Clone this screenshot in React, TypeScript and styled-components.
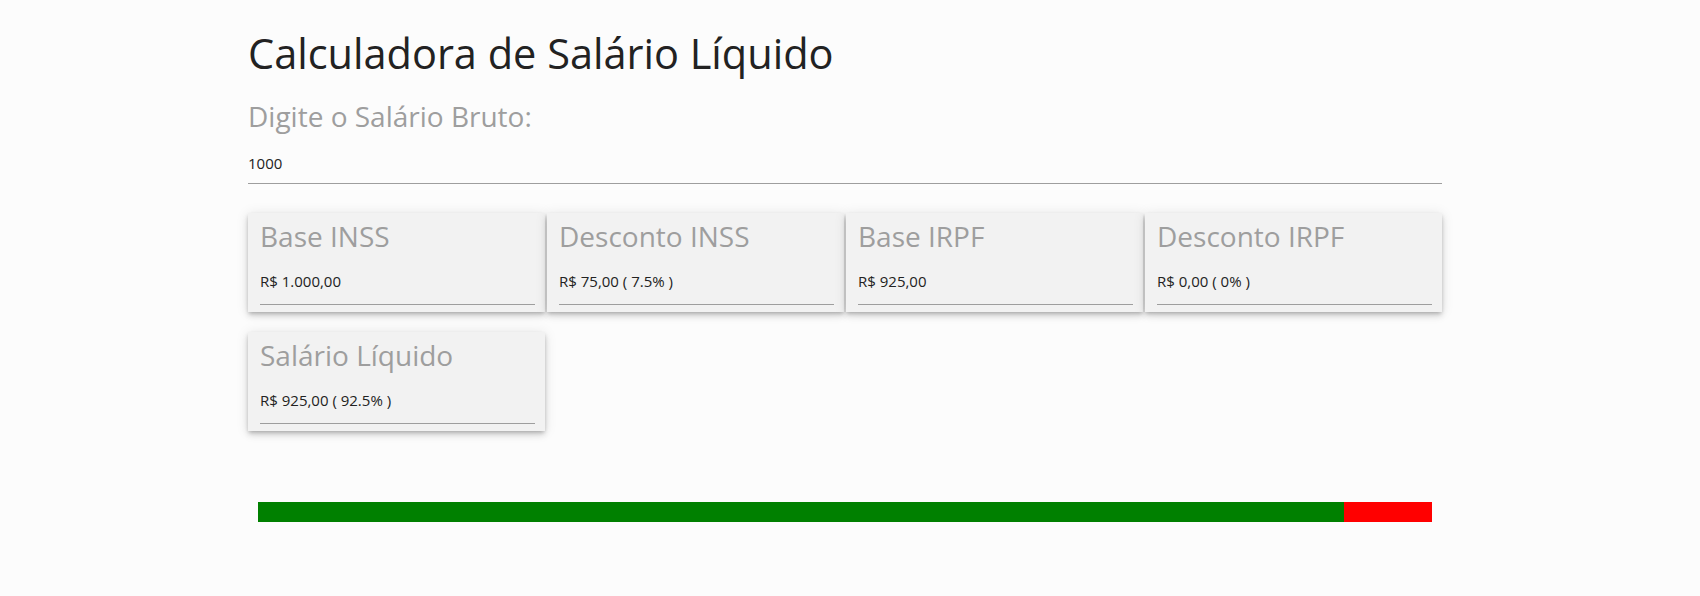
import React, {useMemo, useState} from "react";
import styled, {createGlobalStyle} from "styled-components";

const GlobalStyle = createGlobalStyle`
  body {
    margin: 0;
    background: #fcfcfc;
    font-family: "Open Sans", "Noto Sans", sans-serif;
  }
`

const Page = styled.div`
  padding-top: 29px;
`

const Container = styled.div`
  width: 1194px;
  margin-left: 248px;
`

const Title = styled.h1`
  margin: 0;
  font-size: 41.5px;
  line-height: 48px;
  font-weight: 400;
  color: #222;
`

const Label = styled.label`
  display: block;
  margin-top: 22px;
  font-size: 28px;
  line-height: 34px;
  color: #9e9e9e;
`

const SalaryInput = styled.input`
  display: block;
  box-sizing: border-box;
  width: 100%;
  height: 41px;
  margin-top: 10px;
  padding: 0;
  border: none;
  border-bottom: 1px solid #9e9e9e;
  background: transparent;
  font-family: inherit;
  font-size: 15px;
  color: #222;
  outline: none;
`

const CardGrid = styled.div`
  display: grid;
  grid-template-columns: repeat(4, 1fr);
  column-gap: 2px;
  row-gap: 20px;
  margin-top: 29px;
`

const Card = styled.div`
  box-sizing: border-box;
  height: 99px;
  padding: 6px 10px 0 12px;
  background: #f2f2f2;
  box-shadow: 0 4px 6px 0 rgba(0, 0, 0, 0.12),
  0 1px 12px 0 rgba(0, 0, 0, 0.1),
  0 2px 4px -1px rgba(0, 0, 0, 0.22);
`

const CardTitle = styled.div`
  font-size: 28px;
  line-height: 34px;
  color: #9e9e9e;
`

const CardValue = styled.input`
  display: block;
  box-sizing: border-box;
  width: 100%;
  height: 34px;
  margin-top: 18px;
  padding: 0 0 13px 0;
  border: none;
  border-bottom: 1px solid #9e9e9e;
  background: transparent;
  font-family: inherit;
  font-size: 15px;
  line-height: 20px;
  color: #222;
  outline: none;
`

const Bar = styled.div`
  display: flex;
  height: 20px;
  margin: 71px 10px 0 10px;
`

const BarPart = styled.div<{ color: string }>`
  height: 100%;
  background: ${props => props.color};
`

const INSS_TABLE = [
    {limit: 1045, rate: 0.075},
    {limit: 2089.6, rate: 0.09},
    {limit: 3134.4, rate: 0.12},
    {limit: 6101.06, rate: 0.14},
];

const IRPF_TABLE = [
    {limit: 1903.98, rate: 0, deduction: 0},
    {limit: 2826.65, rate: 0.075, deduction: 142.8},
    {limit: 3751.05, rate: 0.15, deduction: 354.8},
    {limit: 4664.68, rate: 0.225, deduction: 636.13},
    {limit: Infinity, rate: 0.275, deduction: 869.36},
];

const round = (value: number) => Math.round(value * 100) / 100;

const calcInss = (base: number) => {
    let discount = 0;
    let previous = 0;
    for (const range of INSS_TABLE) {
        if (base <= previous) break;
        const slice = Math.min(base, range.limit) - previous;
        discount += slice * range.rate;
        previous = range.limit;
    }
    return round(discount);
};

const calcIrpf = (base: number) => {
    const range = IRPF_TABLE.find(item => base <= item.limit)!;
    return round(Math.max(base * range.rate - range.deduction, 0));
};

// pt-BR money without relying on the browser locale data
const money = (value: number) => {
    const [int, dec] = value.toFixed(2).split(".");
    return "R$ " + int.replace(/\B(?=(\d{3})+(?!\d))/g, ".") + "," + dec;
};

const percent = (part: number, total: number) => {
    if (!total) return "0%";
    return round((part / total) * 100) + "%";
};

export default function App() {
    const [salary, setSalary] = useState("1000");
    const gross = Number(salary) || 0;

    const result = useMemo(() => {
        const inss = calcInss(gross);
        const baseIrpf = round(gross - inss);
        const irpf = calcIrpf(baseIrpf);
        const net = round(baseIrpf - irpf);
        return {inss, baseIrpf, irpf, net};
    }, [gross]);

    const cards = [
        {title: "Base INSS", value: money(gross)},
        {title: "Desconto INSS", value: `${money(result.inss)} ( ${percent(result.inss, gross)} )`},
        {title: "Base IRPF", value: money(result.baseIrpf)},
        {title: "Desconto IRPF", value: `${money(result.irpf)} ( ${percent(result.irpf, gross)} )`},
        {title: "Salário Líquido", value: `${money(result.net)} ( ${percent(result.net, gross)} )`},
    ];

    const share = (value: number) => (gross ? (value / gross) * 100 : 0) + "%";

    return (
        <Page>
            <GlobalStyle/>
            <Container>
                <Title>Calculadora de Salário Líquido</Title>
                <Label htmlFor="salary">Digite o Salário Bruto:</Label>
                <SalaryInput id="salary" type="number" value={salary} onChange={e => setSalary(e.target.value)}/>
                <CardGrid>
                    {cards.map(card => (
                        <Card key={card.title}>
                            <CardTitle>{card.title}</CardTitle>
                            <CardValue readOnly value={card.value}/>
                        </Card>
                    ))}
                </CardGrid>
                <Bar>
                    <BarPart color="#008000" style={{width: share(result.net)}}/>
                    <BarPart color="#ff8c00" style={{width: share(result.irpf)}}/>
                    <BarPart color="#ff0000" style={{width: share(result.inss)}}/>
                </Bar>
            </Container>
        </Page>
    )
}
